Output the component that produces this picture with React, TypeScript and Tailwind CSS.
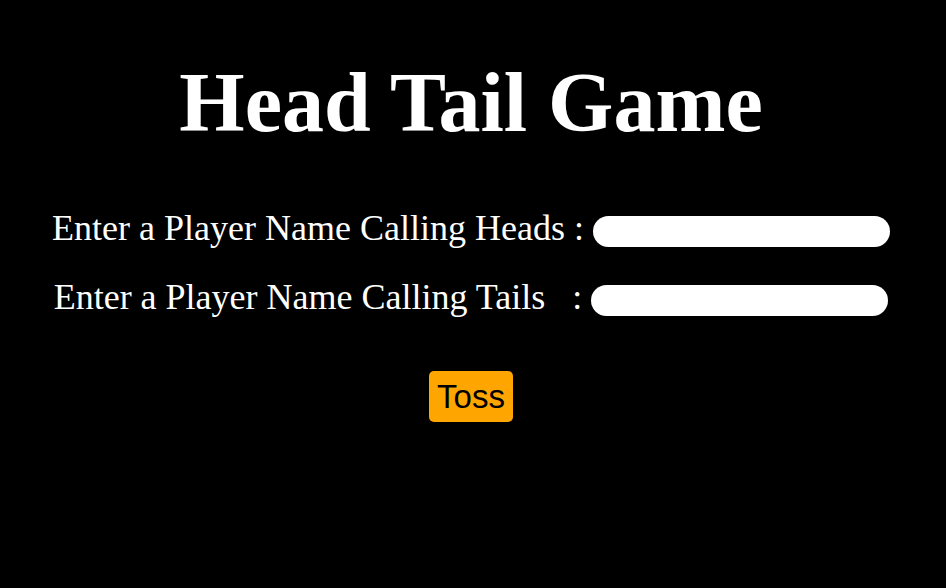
import React from "react";

export default function App() {
  return (
    <div className="min-h-[588px] w-full bg-black text-white flex flex-col items-center pr-[4px] pt-[61px]" style={{ fontFamily: '"Liberation Serif", "Times New Roman", serif' }}>
      <h1 className="text-[84px] leading-none font-bold h-[84px]">Head Tail Game</h1>
      <div className="mt-[66px] flex items-center h-[40px]">
        <label className="text-[36px] leading-[40px] pb-[7px] whitespace-pre">Enter a Player Name Calling Heads :</label>
        <input className="ml-[9px] w-[297px] h-[31px] rounded-full bg-white border-0 outline-none" />
      </div>
      <div className="mt-[29px] flex items-center h-[40px]">
        <label className="text-[36px] leading-[40px] pb-[7px] whitespace-pre">{"Enter a Player Name Calling Tails   :"}</label>
        <input className="ml-[9px] w-[297px] h-[31px] rounded-full bg-white border-0 outline-none" />
      </div>
      <button className="mt-[51px] w-[84px] h-[51px] rounded-[5px] bg-[#ffa500] text-black text-[33px] leading-none" style={{ fontFamily: '"Liberation Sans", Arial, sans-serif' }}>Toss</button>
    </div>
  );
}
